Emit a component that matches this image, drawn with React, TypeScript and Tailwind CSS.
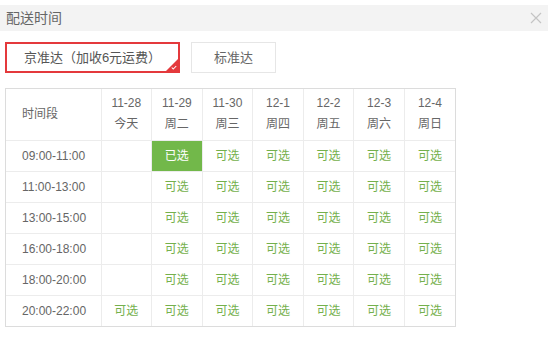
const days = [
  { date: "11-28", week: "今天" },
  { date: "11-29", week: "周二" },
  { date: "11-30", week: "周三" },
  { date: "12-1", week: "周四" },
  { date: "12-2", week: "周五" },
  { date: "12-3", week: "周六" },
  { date: "12-4", week: "周日" },
];

// 0 = 不可选(空), 1 = 可选, 2 = 已选
const slots: { time: string; cells: number[] }[] = [
  { time: "09:00-11:00", cells: [0, 2, 1, 1, 1, 1, 1] },
  { time: "11:00-13:00", cells: [0, 1, 1, 1, 1, 1, 1] },
  { time: "13:00-15:00", cells: [0, 1, 1, 1, 1, 1, 1] },
  { time: "16:00-18:00", cells: [0, 1, 1, 1, 1, 1, 1] },
  { time: "18:00-20:00", cells: [0, 1, 1, 1, 1, 1, 1] },
  { time: "20:00-22:00", cells: [1, 1, 1, 1, 1, 1, 1] },
];

export default function App() {
  return (
    <div
      className="w-[548px] h-[340px] bg-white pt-[5px] text-[#666]"
      style={{ fontFamily: '"Liberation Sans", "Noto Sans CJK SC", sans-serif' }}
    >
      {/* 标题栏 */}
      <div className="flex h-[26px] items-center justify-between bg-[#f3f3f3] pl-[6px] pr-[6px]">
        <span className="text-[14px] text-[#666]">配送时间</span>
        <svg viewBox="0 0 12 12" className="h-[12px] w-[12px]" aria-hidden="true">
          <path d="M1 1l10 10M11 1L1 11" stroke="#c4c4c4" strokeWidth="1.2" fill="none" />
        </svg>
      </div>

      {/* 配送方式 */}
      <div className="mt-[11px] flex gap-[11px] pl-[5px]">
        <button
          type="button"
          className="relative flex h-[31px] w-[175px] items-center justify-center border-2 border-[#e4393c] bg-white text-[13px] text-[#555]"
        >
          京准达（加收6元运费）
          <span className="absolute bottom-0 right-0 h-0 w-0 border-l-[12px] border-b-[12px] border-l-transparent border-b-[#e4393c]" />
          <svg viewBox="0 0 8 6" className="absolute bottom-[1px] right-[1px] h-[5px] w-[6px]" aria-hidden="true">
            <path d="M1 3l2 2 4-4" stroke="#fff" strokeWidth="1.4" fill="none" />
          </svg>
        </button>
        <button
          type="button"
          className="flex h-[31px] w-[85px] items-center justify-center border border-[#e6e6e6] bg-white text-[13px] text-[#666]"
        >
          标准达
        </button>
      </div>

      {/* 时间表 */}
      <div className="ml-[5px] mt-[15px] w-[451px] border border-[#dcdcdc]">
        <table className="w-full table-fixed border-collapse text-[12px]">
          <colgroup>
            <col className="w-[95px]" />
            {days.map((d) => (
              <col key={d.date} />
            ))}
          </colgroup>
          <thead>
            <tr className="h-[51px]">
              <th className="border-r border-b border-[#ececec] pl-[16px] text-left font-normal">时间段</th>
              {days.map((d, i) => (
                <th
                  key={d.date}
                  className={`border-b border-[#ececec] font-normal leading-[21px] ${i < days.length - 1 ? "border-r" : ""}`}
                >
                  <div>{d.date}</div>
                  <div>{d.week}</div>
                </th>
              ))}
            </tr>
          </thead>
          <tbody>
            {slots.map((s, r) => (
              <tr key={s.time} className="h-[31px]">
                <td
                  className={`border-r border-[#ececec] pl-[16px] ${r < slots.length - 1 ? "border-b" : ""}`}
                >
                  {s.time}
                </td>
                {s.cells.map((c, i) => (
                  <td
                    key={i}
                    className={`border-[#ececec] text-center ${i < s.cells.length - 1 ? "border-r" : ""} ${
                      r < slots.length - 1 ? "border-b" : ""
                    } ${c === 2 ? "bg-[#72b84a] text-white" : "text-[#74b04c]"}`}
                  >
                    {c === 2 ? "已选" : c === 1 ? "可选" : ""}
                  </td>
                ))}
              </tr>
            ))}
          </tbody>
        </table>
      </div>
    </div>
  );
}
